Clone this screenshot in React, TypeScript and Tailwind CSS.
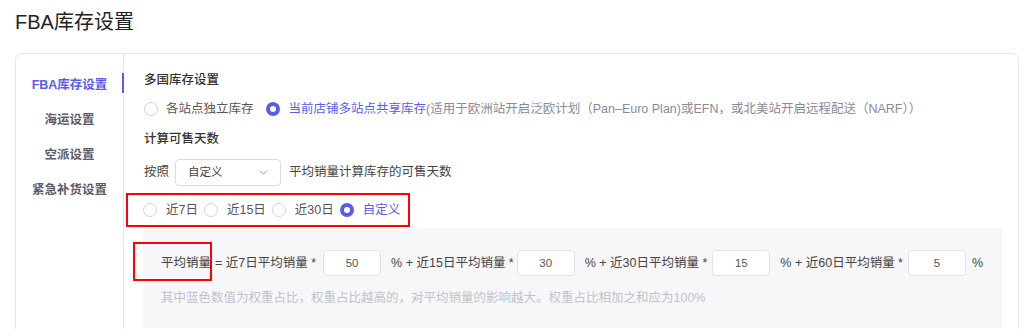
import React, { useState } from 'react';
import { ChevronDown } from 'lucide-react';

const blue = 'text-[#5b5ce6]';

const Radio = ({ checked }: { checked: boolean }) => (
  <span
    className={`inline-block w-[14px] h-[14px] rounded-full shrink-0 bg-white ${
      checked ? 'border-[4px] border-[#5b5ce6]' : 'border border-[#d4d4da]'
    }`}
  />
);

const menu = ['FBA库存设置', '海运设置', '空派设置', '紧急补货设置'];
const periods = ['近7日', '近15日', '近30日', '自定义'];
const weights = [
  { label: '近7日平均销量', value: '50', ml: 'ml-[7px]' },
  { label: '近15日平均销量', value: '30', ml: 'ml-[3px]' },
  { label: '近30日平均销量', value: '15', ml: 'ml-[5px]' },
  { label: '近60日平均销量', value: '5', ml: 'ml-[5px]' },
];

export default function App() {
  const [shared, setShared] = useState(true);
  const [period, setPeriod] = useState('自定义');

  return (
    <div className="w-[1024px] h-[329px] overflow-hidden bg-white px-[15px] font-[family-name:Liberation_Sans,Noto_Sans_CJK_SC,sans-serif] text-[12.5px] text-[#555] whitespace-nowrap">
      <h1 className="pt-[10px] text-[20px] leading-[24px] text-[#222]">FBA库存设置</h1>

      <div className="mt-[19px] w-[1004px] h-[300px] flex border border-[#e4e4ea] rounded-tl-[7px] rounded-tr-[7px]">
        {/* sidebar */}
        <div className="w-[108px] shrink-0 border-r border-[#e4e4ea] pt-[14px] flex flex-col">
          {menu.map((m, i) => (
            <div
              key={m}
              className={`relative h-[35px] flex items-center justify-center font-semibold ${
                i === 0 ? blue : 'text-[#5c5c68]'
              }`}
            >
              {m}
              {i === 0 && <span className="absolute right-[-1px] top-[5px] w-[2px] h-[20px] bg-[#5b5ce6]" />}
            </div>
          ))}
        </div>

        {/* content */}
        <div className="flex-1 pl-[20px] pr-[15px] pt-[16px]">
          <div className="leading-[20px] font-medium text-[#333]">多国库存设置</div>

          <div className="mt-[9px] h-[20px] flex items-center">
            <button className="flex items-center gap-[8px] shrink-0" onClick={() => setShared(false)}>
              <Radio checked={!shared} />
              <span>各站点独立库存</span>
            </button>
            <button className="ml-[12px] flex items-center gap-[9px] shrink-0" onClick={() => setShared(true)}>
              <Radio checked={shared} />
              <span>
                <span className={blue}>当前店铺多站点共享库存</span>
                <span className="text-[#8a8a94]">(适用于欧洲站开启泛欧计划（Pan–Euro Plan)或EFN，或北美站开启远程配送（NARF））</span>
              </span>
            </button>
          </div>

          <div className="mt-[10px] leading-[20px] font-medium text-[#333]">计算可售天数</div>

          <div className="mt-[10px] flex items-center">
            <span className="text-[#444]">按照</span>
            <div className="ml-[6px] w-[106px] h-[27px] flex items-center justify-between pl-[12px] pr-[10px] border border-[#dcdce2] rounded-[4px] bg-white text-[11.5px] text-[#444]">
              <span>自定义</span>
              <ChevronDown size={13} strokeWidth={1.5} className="text-[#888]" />
            </div>
            <span className="ml-[8px] text-[#444]">平均销量计算库存的可售天数</span>
          </div>

          {/* annotated radio group */}
          <div className="mt-[7px] ml-[-18px] w-[284px] h-[34px] border-[2.5px] border-[#f00] flex items-center pl-[15px]">
            {periods.map((p) => (
              <button key={p} className="flex items-center gap-[9px] mr-[6px] shrink-0" onClick={() => setPeriod(p)}>
                <Radio checked={period === p} />
                <span className={period === p ? blue : ''}>{p}</span>
              </button>
            ))}
          </div>

          {/* formula panel */}
          <div className="relative mt-[1px] ml-[-1px] w-[859px] h-[100px] bg-[#f7f7f9] pl-[18px] pt-[22px]">
            <span className="absolute left-[-10px] top-[14px] w-[79px] h-[39px] border-[2.5px] border-[#f00]" />
            <div className="flex items-center h-[26px] text-[#444]">
              <span>平均销量</span>
              {weights.map((w, i) => (
                <React.Fragment key={w.label}>
                  <span className="ml-[4px]">{i === 0 ? '=' : '% +'} {w.label} *</span>
                  <input
                    defaultValue={w.value}
                    className={`${w.ml} mr-[6px] w-[58px] h-[26px] bg-white border border-[#e2e2e8] rounded-[4px] text-center text-[11.5px] text-[#555] outline-none`}
                  />
                </React.Fragment>
              ))}
              <span>%</span>
            </div>
            <div className="mt-[12px] leading-[20px] text-[#c2c2ca]">
              其中蓝色数值为权重占比，权重占比越高的，对平均销量的影响越大。权重占比相加之和应为100%
            </div>
          </div>
        </div>
      </div>
    </div>
  );
}
